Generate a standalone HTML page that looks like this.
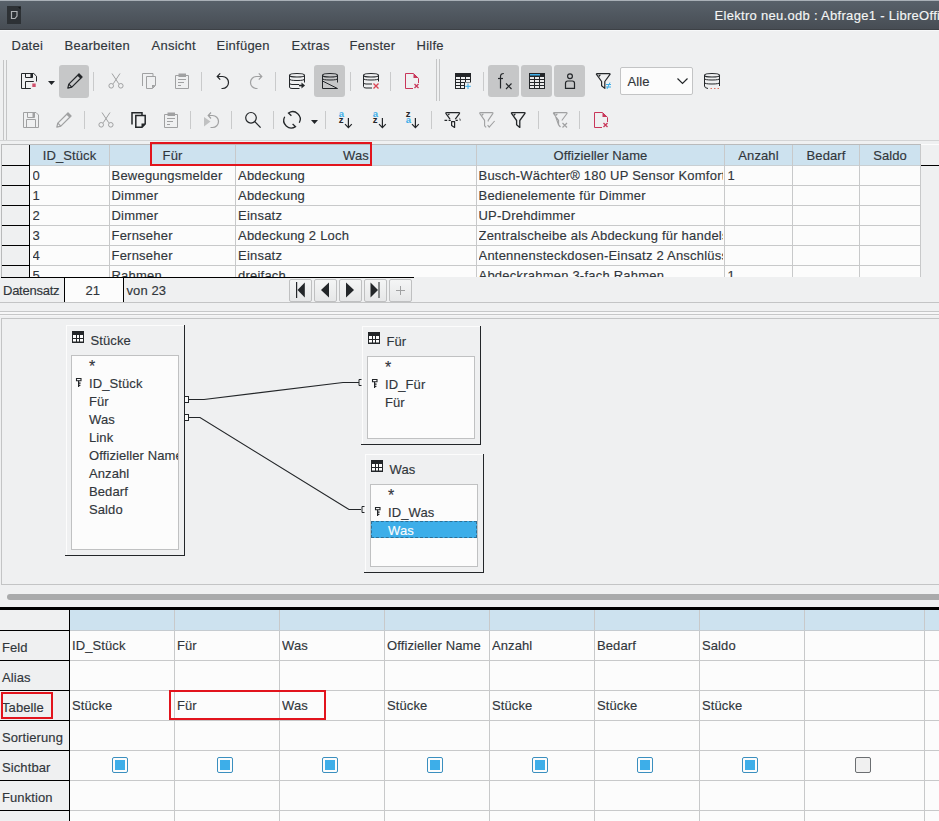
<!DOCTYPE html>
<html><head><meta charset="utf-8">
<style>
*{margin:0;padding:0;box-sizing:border-box}
html,body{width:939px;height:821px;overflow:hidden;background:#eff0f1;font-family:"Liberation Sans",sans-serif;color:#31363b;font-size:13px;position:relative}
.a{position:absolute}
.t{position:absolute;white-space:nowrap;line-height:1.5;letter-spacing:0.1px;-webkit-text-stroke:0.15px currentColor}
svg{position:absolute;overflow:visible}
</style></head><body>

<div class="a" style="left:0px;top:0px;width:939px;height:1px;background:#a9b0b7;"></div>
<div class="a" style="left:0px;top:1px;width:939px;height:28px;background:linear-gradient(#58616a,#474d54);"></div>
<div class="a" style="left:0px;top:29px;width:939px;height:1px;background:#3d4146;"></div>
<div class="a" style="left:0px;top:30px;width:939px;height:1px;background:#f7f8f9;"></div>
<div class="a" style="left:7px;top:6px;width:14px;height:18px;background:#2d3135;"></div>
<svg style="left:7px;top:6px" width="14" height="18" viewBox="0 0 14 18"><path d="M4.5 5.5h5.5v4.5l-2 2.5h-3.5z" fill="none" stroke="#aeb1b4" stroke-width="1.2"/><path d="M11 1h2.5v2.5z" fill="#15181a"/></svg>
<div class="t" style="left:714.5px;top:5.70px;font-size:13px;color:#f4f5f5;letter-spacing:0.3px">Elektro neu.odb : Abfrage1 - LibreOffice Base: Abfrageentwurf</div>
<div class="t" style="left:11.5px;top:35.70px;font-size:13px;letter-spacing:0.25px">Datei</div>
<div class="t" style="left:64.5px;top:35.70px;font-size:13px;letter-spacing:0.25px">Bearbeiten</div>
<div class="t" style="left:151.5px;top:35.70px;font-size:13px;letter-spacing:0.25px">Ansicht</div>
<div class="t" style="left:216.5px;top:35.70px;font-size:13px;letter-spacing:0.25px">Einfügen</div>
<div class="t" style="left:291.5px;top:35.70px;font-size:13px;letter-spacing:0.25px">Extras</div>
<div class="t" style="left:349.5px;top:35.70px;font-size:13px;letter-spacing:0.25px">Fenster</div>
<div class="t" style="left:416.5px;top:35.70px;font-size:13px;letter-spacing:0.25px">Hilfe</div>
<div class="a" style="left:3px;top:60px;width:1px;height:80px;background:#c4c5c6;"></div>
<div class="a" style="left:6px;top:60px;width:1px;height:80px;background:#c4c5c6;"></div>
<div class="a" style="left:436px;top:59px;width:1px;height:42px;background:#c4c5c6;"></div>
<div class="a" style="left:439px;top:59px;width:1px;height:42px;background:#c4c5c6;"></div>
<div class="a" style="left:0px;top:140px;width:939px;height:1px;background:#d3d4d5;"></div>
<div class="a" style="left:59px;top:65px;width:30px;height:33px;background:#c6c7c8;border-radius:3px"></div>
<div class="a" style="left:314px;top:65px;width:31px;height:32px;background:#c6c7c8;border-radius:3px"></div>
<div class="a" style="left:488px;top:65px;width:31px;height:32px;background:#c6c7c8;border-radius:3px"></div>
<div class="a" style="left:521px;top:65px;width:31px;height:32px;background:#c6c7c8;border-radius:3px"></div>
<div class="a" style="left:554px;top:65px;width:31px;height:32px;background:#c6c7c8;border-radius:3px"></div>
<div class="a" style="left:93px;top:72px;width:1px;height:19px;background:#c9cacb;"></div>
<div class="a" style="left:201px;top:72px;width:1px;height:19px;background:#c9cacb;"></div>
<div class="a" style="left:275px;top:72px;width:1px;height:19px;background:#c9cacb;"></div>
<div class="a" style="left:350px;top:72px;width:1px;height:19px;background:#c9cacb;"></div>
<div class="a" style="left:390px;top:72px;width:1px;height:19px;background:#c9cacb;"></div>
<div class="a" style="left:483px;top:72px;width:1px;height:19px;background:#c9cacb;"></div>
<div class="a" style="left:84px;top:111px;width:1px;height:18px;background:#c9cacb;"></div>
<div class="a" style="left:190px;top:111px;width:1px;height:18px;background:#c9cacb;"></div>
<div class="a" style="left:231px;top:111px;width:1px;height:18px;background:#c9cacb;"></div>
<div class="a" style="left:273px;top:111px;width:1px;height:18px;background:#c9cacb;"></div>
<div class="a" style="left:325px;top:111px;width:1px;height:18px;background:#c9cacb;"></div>
<div class="a" style="left:431px;top:111px;width:1px;height:18px;background:#c9cacb;"></div>
<div class="a" style="left:538px;top:111px;width:1px;height:18px;background:#c9cacb;"></div>
<div class="a" style="left:579px;top:111px;width:1px;height:18px;background:#c9cacb;"></div>
<svg style="left:21px;top:73px" width="16" height="16" viewBox="0 0 16 16"><path d="M15.5 8.5V3.2L12.8 0.5H0.5V15.5H9.8" fill="none" stroke="#232629" stroke-width="1" /><path d="M4.5 0.5V4.5H11.5V0.5" fill="none" stroke="#232629" stroke-width="1" /><path d="M9.4 1h2.3v3.5H9.4z" fill="#232629"/><path d="M4.5 15.5V8.5H12.8" fill="none" stroke="#232629" stroke-width="1" /><path d="M11.3 10.5h3.4v3.6h-3.4z" fill="#d0506c"/></svg>
<svg style="left:48px;top:81px" width="7" height="4" viewBox="0 0 7 4"><path d="M0 0h7l-3.5 4z" fill="#232629"/></svg>
<svg style="left:67px;top:73px" width="16" height="16" viewBox="0 0 16 16"><path d="M0.8 15.2L1.8 11.2L12 1L15 4L4.8 14.2Z" fill="none" stroke="#232629" stroke-width="1.2" stroke-linejoin="round"/><path d="M12 0.6L15.4 4L13.6 5.8L10.2 2.4Z" fill="#232629"/><path d="M1.8 11.2L4.8 14.2" fill="none" stroke="#232629" stroke-width="1.2" /></svg>
<svg style="left:108px;top:73px" width="16" height="16" viewBox="0 0 16 16"><path d="M4 0.5L10.8 10.8M12 0.5L5.2 10.8" fill="none" stroke="#a0a1a2" stroke-width="1" /><circle cx="3.2" cy="12.8" r="2.3" fill="none" stroke="#a0a1a2"/><circle cx="12.8" cy="12.8" r="2.3" fill="none" stroke="#a0a1a2"/></svg>
<svg style="left:141px;top:73px" width="16" height="16" viewBox="0 0 16 16"><path d="M1.5 13V0.5H12V3" fill="none" stroke="#a0a1a2" stroke-width="1" /><path d="M5.5 3.5H14.5V12.5L11.5 15.5H5.5Z" fill="none" stroke="#a0a1a2" stroke-width="1" /><path d="M11 15.5V12H14.5Z" fill="#a0a1a2"/></svg>
<svg style="left:174px;top:73px" width="16" height="16" viewBox="0 0 16 16"><path d="M1.5 2.5H14.5V15.5H1.5Z" fill="none" stroke="#a0a1a2" stroke-width="1" /><path d="M4.5 0.5H12V4H4.5z" fill="#a0a1a2"/><path d="M4 6.5H12M4 9.5H10M4 12.5H7" fill="none" stroke="#a0a1a2" stroke-width="1" /></svg>
<svg style="left:215px;top:73px" width="16" height="16" viewBox="0 0 16 16"><path d="M2.5 3.5H7.5A6 6 0 0 1 7.5 15.5H6.5" fill="none" stroke="#232629" stroke-width="1.2" /><path d="M5.2 0.3L2.2 3.5L5.2 6.7" fill="none" stroke="#232629" stroke-width="1.2" /></svg>
<svg style="left:248px;top:73px" width="16" height="16" viewBox="0 0 16 16"><path d="M13.5 3.5H8.5A6 6 0 0 0 8.5 15.5H9.5" fill="none" stroke="#a0a1a2" stroke-width="1.2" /><path d="M10.8 0.3L13.8 3.5L10.8 6.7" fill="none" stroke="#a0a1a2" stroke-width="1.2" /></svg>
<svg style="left:289px;top:73px" width="16" height="16" viewBox="0 0 16 16"><path d="M0.5 2.5Q0.5 0.5 8 0.5Q15.5 0.5 15.5 2.5Q15.5 4 8 4Q0.5 4 0.5 2.5Z" fill="none" stroke="#232629" stroke-width="1.2" /><path d="M0.5 2.5V14Q0.5 15.5 3 15.5H10.5M15.5 2.5V9.5" fill="none" stroke="#232629" stroke-width="1" /><path d="M0.5 6.0Q0.5 7.5 8 7.5Q15.5 7.5 15.5 6.0" fill="none" stroke="#232629" stroke-width="1" /><path d="M0.5 10Q0.5 11.5 3 11.5H10" fill="none" stroke="#232629" stroke-width="1" /><path d="M10 12.5H13" fill="none" stroke="#232629" stroke-width="1.6" /><path d="M12.5 9.5L16 12.5L12.5 15.5Z" fill="#232629"/></svg>
<svg style="left:322px;top:73px" width="16" height="16" viewBox="0 0 16 16"><path d="M0.5 2.5Q0.5 0.5 8 0.5Q15.5 0.5 15.5 2.5Q15.5 4 8 4Q0.5 4 0.5 2.5Z" fill="none" stroke="#232629" stroke-width="1.2" /><path d="M0.5 2.5V15.5H15.5L0.5 8M15.5 2.5V9.5" fill="none" stroke="#232629" stroke-width="1" /><path d="M0.5 5.5Q0.5 7 8 7Q15.5 7 15.5 5.5" fill="none" stroke="#232629" stroke-width="1" /></svg>
<svg style="left:363px;top:73px" width="16" height="16" viewBox="0 0 16 16"><path d="M0.5 2.5Q0.5 0.5 8 0.5Q15.5 0.5 15.5 2.5Q15.5 4 8 4Q0.5 4 0.5 2.5Z" fill="none" stroke="#232629" stroke-width="1.2" /><path d="M0.5 2.5V13.5Q0.5 15 3 15H9M15.5 2.5V8.5" fill="none" stroke="#232629" stroke-width="1" /><path d="M0.5 5.5Q0.5 7 8 7Q15.5 7 15.5 5.5" fill="none" stroke="#232629" stroke-width="1" /><path d="M0.5 9.5Q0.5 11 3 11H9" fill="none" stroke="#232629" stroke-width="1" /><path d="M10.5 10.5L15.5 15.5M15.5 10.5L10.5 15.5" fill="none" stroke="#da4453" stroke-width="1.3" /></svg>
<svg style="left:405px;top:73px" width="16" height="16" viewBox="0 0 16 16"><path d="M8.5 0.5H0.5V15.5H8" fill="none" stroke="#c8375a" stroke-width="1" /><path d="M8.5 0.5L13.5 5.5V10" fill="none" stroke="#c8375a" stroke-width="1" /><path d="M8.5 0.5V5H13.5Z" fill="#c8375a"/><path d="M9.5 11L13.5 15M13.5 11L9.5 15" fill="none" stroke="#c8375a" stroke-width="1.3" /></svg>
<svg style="left:455px;top:73px" width="16" height="16" viewBox="0 0 16 16"><path d="M0 0H16V9.5H10V16H0Z" fill="#232629"/><path d="M1 4h4v2h-4z" fill="#eff0f1"/><path d="M6 4h4v2h-4z" fill="#eff0f1"/><path d="M11 4h4v2h-4z" fill="#eff0f1"/><path d="M1 7h4v2h-4z" fill="#eff0f1"/><path d="M6 7h4v2h-4z" fill="#eff0f1"/><path d="M11 7h4v2h-4z" fill="#eff0f1"/><path d="M1 10h4v2h-4z" fill="#eff0f1"/><path d="M6 10h4v2h-4z" fill="#eff0f1"/><path d="M1 13h4v2h-4z" fill="#eff0f1"/><path d="M6 13h4v2h-4z" fill="#eff0f1"/><path d="M9 10h1v6h-1z" fill="#232629"/><path d="M13 10.5V16M10.3 13.3H15.8" fill="none" stroke="#3daee9" stroke-width="1" /></svg>
<svg style="left:496px;top:73px" width="16" height="16" viewBox="0 0 16 16"><path d="M4.5 15.5V3.5Q4.5 0.5 7.8 0.5" fill="none" stroke="#232629" stroke-width="1.2" /><path d="M2 5.5H7" fill="none" stroke="#232629" stroke-width="1.2" /><path d="M10 10.5L15.5 16M15.5 10.5L10 16" fill="none" stroke="#232629" stroke-width="1.2" /></svg>
<svg style="left:529px;top:73px" width="16" height="16" viewBox="0 0 16 16"><path d="M0 0H16V16H0Z" fill="#232629"/><path d="M1 4h4v2h-4z" fill="#e8e8e8"/><path d="M6 4h4v2h-4z" fill="#e8e8e8"/><path d="M11 4h4v2h-4z" fill="#e8e8e8"/><path d="M1 7h4v2h-4z" fill="#e8e8e8"/><path d="M6 7h4v2h-4z" fill="#e8e8e8"/><path d="M11 7h4v2h-4z" fill="#e8e8e8"/><path d="M1 10h4v2h-4z" fill="#e8e8e8"/><path d="M6 10h4v2h-4z" fill="#e8e8e8"/><path d="M11 10h4v2h-4z" fill="#e8e8e8"/><path d="M1 13h4v2h-4z" fill="#e8e8e8"/><path d="M6 13h4v2h-4z" fill="#e8e8e8"/><path d="M11 13h4v2h-4z" fill="#e8e8e8"/><path d="M1 1h10v1.5H1z" fill="#3daee9"/></svg>
<svg style="left:562px;top:73px" width="16" height="16" viewBox="0 0 16 16"><circle cx="8" cy="3.2" r="2.4" fill="none" stroke="#232629" stroke-width="1.2"/><path d="M3.5 15.4V10.2Q3.5 8 5.7 8H10.3Q12.5 8 12.5 10.2V15.4Z" fill="none" stroke="#232629" stroke-width="1.2" /></svg>
<svg style="left:596px;top:73px" width="16" height="16" viewBox="0 0 16 16"><path d="M1.2 0.6H13.3Q14.6 0.6 13.8 1.7L8.8 8.5V15.4L5.6 12.8V8.5L0.7 1.7Q-0.1 0.6 1.2 0.6Z" fill="none" stroke="#232629" stroke-width="1.2" stroke-linejoin="round"/><path d="M2.3 1.8H5L3.3 3.9Z" fill="#232629"/><path d="M10 11.5H15M10 14H15M14 9.5L11 16" fill="none" stroke="#3daee9" stroke-width="1" /></svg>
<div class="a" style="left:620px;top:67px;width:73px;height:28px;background:#fcfcfc;border:1px solid #c3c4c5;border-radius:2px"></div>
<div class="t" style="left:627.5px;top:71.70px;font-size:13px;">Alle</div>
<svg style="left:677px;top:78px" width="11" height="6" viewBox="0 0 11 6"><path d="M0.5 0.5l5 5 5-5" fill="none" stroke="#232629" stroke-width="1.2"/></svg>
<svg style="left:704px;top:73px" width="16" height="16" viewBox="0 0 16 16"><path d="M0.5 2.5Q0.5 0.5 8 0.5Q15.5 0.5 15.5 2.5Q15.5 4 8 4Q0.5 4 0.5 2.5Z" fill="none" stroke="#232629" stroke-width="1.2" /><path d="M0.5 2.5V13Q0.5 15 4 15.5M15.5 2.5V13" fill="none" stroke="#232629" stroke-width="1" /><path d="M0.5 5.5Q0.5 7 8 7Q15.5 7 15.5 5.5" fill="none" stroke="#232629" stroke-width="1" /><path d="M0.5 9.5Q0.5 11 8 11Q15.5 11 15.5 9.5" fill="none" stroke="#232629" stroke-width="1" /><path d="M6.5 15.5H8M10 15.5H11.5M13.5 15.5H15" fill="none" stroke="#e07060" stroke-width="1.2" /></svg>
<svg style="left:23px;top:112px" width="16" height="16" viewBox="0 0 16 16"><path d="M0.5 0.5H13L15.5 3V15.5H0.5Z" fill="none" stroke="#a0a1a2" stroke-width="1" /><path d="M4.5 0.5V5.5H11.5V0.5" fill="none" stroke="#a0a1a2" stroke-width="1" /><path d="M9.5 1h2v4h-2z" fill="#a0a1a2"/><path d="M3.5 15.5V7.5H12.5V15.5" fill="none" stroke="#a0a1a2" stroke-width="1" /></svg>
<svg style="left:56px;top:112px" width="16" height="16" viewBox="0 0 16 16"><path d="M0.8 15.2L1.8 11.2L12 1L15 4L4.8 14.2Z" fill="none" stroke="#a0a1a2" stroke-width="1.2" stroke-linejoin="round"/><path d="M12 0.6L15.4 4L13.6 5.8L10.2 2.4Z" fill="#a0a1a2"/><path d="M1.8 11.2L4.8 14.2" fill="none" stroke="#a0a1a2" stroke-width="1.2" /></svg>
<svg style="left:98px;top:112px" width="16" height="16" viewBox="0 0 16 16"><path d="M4 0.5L10.8 10.8M12 0.5L5.2 10.8" fill="none" stroke="#a0a1a2" stroke-width="1" /><circle cx="3.2" cy="12.8" r="2.3" fill="none" stroke="#a0a1a2"/><circle cx="12.8" cy="12.8" r="2.3" fill="none" stroke="#a0a1a2"/></svg>
<svg style="left:131px;top:112px" width="16" height="16" viewBox="0 0 16 16"><path d="M1 12.5V0.8H11V3" fill="none" stroke="#232629" stroke-width="1.5" /><path d="M4.8 3.5H14.2V12L11 15.2H4.8Z" fill="none" stroke="#232629" stroke-width="1.5" /><path d="M10.5 15.5V11.5H14.5Z" fill="#232629"/></svg>
<svg style="left:163px;top:112px" width="16" height="16" viewBox="0 0 16 16"><path d="M1.5 2.5H14.5V15.5H1.5Z" fill="none" stroke="#a0a1a2" stroke-width="1" /><path d="M4.5 0.5H12V4H4.5z" fill="#a0a1a2"/><path d="M4 6.5H12M4 9.5H10M4 12.5H7" fill="none" stroke="#a0a1a2" stroke-width="1" /></svg>
<svg style="left:204px;top:112px" width="16" height="16" viewBox="0 0 16 16"><path d="M0 5L6.5 9.5L0 14.5Z" fill="#c0c1c2"/><path d="M4.5 3.5H8.5A6 6 0 0 1 8.5 15.5H6.5" fill="none" stroke="#a0a1a2" stroke-width="1.2" /><path d="M7 0.5L4.2 3.5L7 6.5" fill="none" stroke="#a0a1a2" stroke-width="1.2" /></svg>
<svg style="left:245px;top:112px" width="16" height="16" viewBox="0 0 16 16"><circle cx="6" cy="5.8" r="5.3" fill="none" stroke="#232629" stroke-width="1.2"/><path d="M9.8 9.6L15.6 15.6" fill="none" stroke="#232629" stroke-width="1.3" /></svg>
<svg style="left:284px;top:112px" width="16" height="16" viewBox="0 0 16 16"><path d="M0.7 4.8A7.5 7.5 0 0 0 11.5 14.6L8.6 11.9" fill="none" stroke="#232629" stroke-width="1.3" /><path d="M15.3 10.8A7.5 7.5 0 0 0 4.5 1L7.4 3.8" fill="none" stroke="#232629" stroke-width="1.3" /></svg>
<svg style="left:311px;top:120px" width="7" height="4" viewBox="0 0 7 4"><path d="M0 0h7l-3.5 4z" fill="#232629"/></svg>
<svg style="left:338px;top:112px" width="16" height="16" viewBox="0 0 16 16"><text x="0.8" y="4.8" font-family="Liberation Sans" font-weight="bold" font-size="9.5" fill="#3daee9">a</text><text x="0.8" y="10.9" font-family="Liberation Sans" font-weight="bold" font-size="9.5" fill="#232629">z</text><path d="M10.4 6V15.5M7 12.2L10.4 15.6L13.8 12.2" fill="none" stroke="#232629" stroke-width="1.2" /></svg>
<svg style="left:372px;top:112px" width="16" height="16" viewBox="0 0 16 16"><text x="0.8" y="4.8" font-family="Liberation Sans" font-weight="bold" font-size="9.5" fill="#3daee9">a</text><text x="0.8" y="10.9" font-family="Liberation Sans" font-weight="bold" font-size="9.5" fill="#232629">z</text><path d="M10.4 6V15.5M7 12.2L10.4 15.6L13.8 12.2" fill="none" stroke="#232629" stroke-width="1.2" /></svg>
<svg style="left:405px;top:112px" width="16" height="16" viewBox="0 0 16 16"><text x="0.8" y="4.8" font-family="Liberation Sans" font-weight="bold" font-size="9.5" fill="#232629">z</text><text x="0.8" y="10.9" font-family="Liberation Sans" font-weight="bold" font-size="9.5" fill="#3daee9">a</text><path d="M10.4 6V15.5M7 12.2L10.4 15.6L13.8 12.2" fill="none" stroke="#232629" stroke-width="1.2" /></svg>
<svg style="left:445px;top:112px" width="16" height="16" viewBox="0 0 16 16"><path d="M5 7.2L1 1.6Q0.4 0.6 1.6 0.6H13.8Q15 0.6 14.4 1.6L10.3 7.2" fill="none" stroke="#232629" stroke-width="1.2" stroke-linejoin="round"/><path d="M2.6 1.8H5.2L3.6 3.6Z" fill="#232629"/><path d="M-0.5 8.4H2.2M3.6 8.4H5.8M10.6 8.4H12.8" fill="none" stroke="#232629" stroke-width="1.1" /><path d="M6.6 9.6V13.4L9.6 15.4V9.6Z" fill="none" stroke="#232629" stroke-width="1.2" stroke-linejoin="round"/><path d="M14.6 5.6L15.9 8.4H14.6Z" fill="#232629"/></svg>
<svg style="left:479px;top:112px" width="16" height="16" viewBox="0 0 16 16"><path d="M5.6 14V8.4L0.9 1.6Q0.3 0.6 1.5 0.6H13.2Q14.4 0.6 13.8 1.6L9.2 8.4V9.5" fill="none" stroke="#a0a1a2" stroke-width="1.1" stroke-linejoin="round"/><path d="M5.6 14L7.2 15.4" fill="none" stroke="#a0a1a2" stroke-width="1.1" /><path d="M8.6 13.2L10.2 15.2L15.6 9" fill="none" stroke="#a0a1a2" stroke-width="1.1" /><path d="M2.3 1.8H5L3.3 3.9Z" fill="#a0a1a2"/></svg>
<svg style="left:511px;top:112px" width="16" height="16" viewBox="0 0 16 16"><path d="M1.2 0.6H13.3Q14.6 0.6 13.8 1.7L8.8 8.5V15.4L5.6 12.8V8.5L0.7 1.7Q-0.1 0.6 1.2 0.6Z" fill="none" stroke="#232629" stroke-width="1.3" stroke-linejoin="round"/><path d="M2.3 1.8H5L3.3 3.9Z" fill="#232629"/></svg>
<svg style="left:553px;top:112px" width="16" height="16" viewBox="0 0 16 16"><path d="M1.2 0.6H13.3Q14.6 0.6 13.8 1.7L8.8 8.5M5.6 13V8.5L0.7 1.7Q-0.1 0.6 1.2 0.6Z" fill="none" stroke="#a0a1a2" stroke-width="1.1" /><path d="M5.6 13L7.5 15" fill="none" stroke="#a0a1a2" stroke-width="1.1" /><path d="M9.5 11L14 15.5M14 11L9.5 15.5" fill="none" stroke="#a0a1a2" stroke-width="1.2" /><path d="M2.3 1.8H5L3.3 3.9Z" fill="#a0a1a2"/></svg>
<svg style="left:594px;top:112px" width="16" height="16" viewBox="0 0 16 16"><path d="M8.5 0.5H0.5V15.5H8" fill="none" stroke="#c8375a" stroke-width="1" /><path d="M8.5 0.5L13.5 5.5V10" fill="none" stroke="#c8375a" stroke-width="1" /><path d="M8.5 0.5V5H13.5Z" fill="#c8375a"/><path d="M9.5 11L13.5 15M13.5 11L9.5 15" fill="none" stroke="#c8375a" stroke-width="1.3" /></svg>
<div class="a" style="left:1px;top:144px;width:938px;height:133px;background:#fcfcfc;"></div>
<div class="a" style="left:1px;top:144px;width:920px;height:1px;background:#b9babb;"></div>
<div class="a" style="left:1px;top:144px;width:1px;height:158px;background:#b9babb;"></div>
<div class="a" style="left:2px;top:145px;width:27px;height:132px;background:#eff0f1;"></div>
<div class="a" style="left:29px;top:145px;width:1px;height:132px;background:#000;"></div>
<div class="a" style="left:30px;top:145px;width:891px;height:20px;background:#cde2ef;"></div>
<div class="a" style="left:921px;top:145px;width:18px;height:132px;background:#eff0f1;"></div>
<div class="a" style="left:921px;top:165px;width:18px;height:1px;background:#000;"></div>
<div class="a" style="left:30px;top:165px;width:891px;height:1px;background:#c9cfd3;"></div>
<div class="a" style="left:109px;top:145px;width:1px;height:132px;background:#c8c9ca;"></div>
<div class="a" style="left:235px;top:145px;width:1px;height:132px;background:#c8c9ca;"></div>
<div class="a" style="left:476px;top:145px;width:1px;height:132px;background:#c8c9ca;"></div>
<div class="a" style="left:724px;top:145px;width:1px;height:132px;background:#c8c9ca;"></div>
<div class="a" style="left:792px;top:145px;width:1px;height:132px;background:#c8c9ca;"></div>
<div class="a" style="left:859px;top:145px;width:1px;height:132px;background:#c8c9ca;"></div>
<div class="a" style="left:920px;top:145px;width:1px;height:132px;background:#c8c9ca;"></div>
<div class="a" style="left:30px;top:185px;width:891px;height:1px;background:#c8c9ca;"></div>
<div class="a" style="left:30px;top:205px;width:891px;height:1px;background:#c8c9ca;"></div>
<div class="a" style="left:30px;top:225px;width:891px;height:1px;background:#c8c9ca;"></div>
<div class="a" style="left:30px;top:245px;width:891px;height:1px;background:#c8c9ca;"></div>
<div class="a" style="left:30px;top:265px;width:891px;height:1px;background:#c8c9ca;"></div>
<div class="a" style="left:2px;top:165px;width:27px;height:1px;background:#000;"></div>
<div class="a" style="left:2px;top:185px;width:27px;height:1px;background:#000;"></div>
<div class="a" style="left:2px;top:205px;width:27px;height:1px;background:#000;"></div>
<div class="a" style="left:2px;top:225px;width:27px;height:1px;background:#000;"></div>
<div class="a" style="left:2px;top:245px;width:27px;height:1px;background:#000;"></div>
<div class="a" style="left:2px;top:265px;width:27px;height:1px;background:#000;"></div>
<div class="t" style="left:30px;width:79px;text-align:center;top:145.70px;font-size:13px">ID_Stück</div>
<div class="t" style="left:110px;width:125px;text-align:center;top:145.70px;font-size:13px">Für</div>
<div class="t" style="left:236px;width:240px;text-align:center;top:145.70px;font-size:13px">Was</div>
<div class="t" style="left:477px;width:247px;text-align:center;top:145.70px;font-size:13px">Offizieller Name</div>
<div class="t" style="left:725px;width:67px;text-align:center;top:145.70px;font-size:13px">Anzahl</div>
<div class="t" style="left:793px;width:66px;text-align:center;top:145.70px;font-size:13px">Bedarf</div>
<div class="t" style="left:860px;width:60px;text-align:center;top:145.70px;font-size:13px">Saldo</div>
<div class="a" style="left:30px;top:165px;width:891px;height:112px;overflow:hidden">
<div class="t" style="left:2.5px;width:76px;overflow:hidden;top:0.70px;font-size:13px;letter-spacing:0.22px">0</div>
<div class="t" style="left:81.5px;width:122px;overflow:hidden;top:0.70px;font-size:13px;letter-spacing:0.22px">Bewegungsmelder</div>
<div class="t" style="left:208px;width:237px;overflow:hidden;top:0.70px;font-size:13px;letter-spacing:0.22px">Abdeckung</div>
<div class="t" style="left:448.5px;width:244px;overflow:hidden;top:0.70px;font-size:13px;letter-spacing:0.22px">Busch-Wächter® 180 UP Sensor Komfort</div>
<div class="t" style="left:697.5px;width:64px;overflow:hidden;top:0.70px;font-size:13px;letter-spacing:0.22px">1</div>
<div class="t" style="left:2.5px;width:76px;overflow:hidden;top:20.70px;font-size:13px;letter-spacing:0.22px">1</div>
<div class="t" style="left:81.5px;width:122px;overflow:hidden;top:20.70px;font-size:13px;letter-spacing:0.22px">Dimmer</div>
<div class="t" style="left:208px;width:237px;overflow:hidden;top:20.70px;font-size:13px;letter-spacing:0.22px">Abdeckung</div>
<div class="t" style="left:448.5px;width:244px;overflow:hidden;top:20.70px;font-size:13px;letter-spacing:0.22px">Bedienelemente für Dimmer</div>
<div class="t" style="left:2.5px;width:76px;overflow:hidden;top:40.70px;font-size:13px;letter-spacing:0.22px">2</div>
<div class="t" style="left:81.5px;width:122px;overflow:hidden;top:40.70px;font-size:13px;letter-spacing:0.22px">Dimmer</div>
<div class="t" style="left:208px;width:237px;overflow:hidden;top:40.70px;font-size:13px;letter-spacing:0.22px">Einsatz</div>
<div class="t" style="left:448.5px;width:244px;overflow:hidden;top:40.70px;font-size:13px;letter-spacing:0.22px">UP-Drehdimmer</div>
<div class="t" style="left:2.5px;width:76px;overflow:hidden;top:60.70px;font-size:13px;letter-spacing:0.22px">3</div>
<div class="t" style="left:81.5px;width:122px;overflow:hidden;top:60.70px;font-size:13px;letter-spacing:0.22px">Fernseher</div>
<div class="t" style="left:208px;width:237px;overflow:hidden;top:60.70px;font-size:13px;letter-spacing:0.22px">Abdeckung 2 Loch</div>
<div class="t" style="left:448.5px;width:244px;overflow:hidden;top:60.70px;font-size:13px;letter-spacing:0.22px">Zentralscheibe als Abdeckung für handelsübliche</div>
<div class="t" style="left:2.5px;width:76px;overflow:hidden;top:80.70px;font-size:13px;letter-spacing:0.22px">4</div>
<div class="t" style="left:81.5px;width:122px;overflow:hidden;top:80.70px;font-size:13px;letter-spacing:0.22px">Fernseher</div>
<div class="t" style="left:208px;width:237px;overflow:hidden;top:80.70px;font-size:13px;letter-spacing:0.22px">Einsatz</div>
<div class="t" style="left:448.5px;width:244px;overflow:hidden;top:80.70px;font-size:13px;letter-spacing:0.22px">Antennensteckdosen-Einsatz 2 Anschlüsse</div>
<div class="t" style="left:2.5px;width:76px;overflow:hidden;top:100.70px;font-size:13px;letter-spacing:0.22px">5</div>
<div class="t" style="left:81.5px;width:122px;overflow:hidden;top:100.70px;font-size:13px;letter-spacing:0.22px">Rahmen</div>
<div class="t" style="left:208px;width:237px;overflow:hidden;top:100.70px;font-size:13px;letter-spacing:0.22px">dreifach</div>
<div class="t" style="left:448.5px;width:244px;overflow:hidden;top:100.70px;font-size:13px;letter-spacing:0.22px">Abdeckrahmen 3-fach Rahmen</div>
<div class="t" style="left:697.5px;width:64px;overflow:hidden;top:100.70px;font-size:13px;letter-spacing:0.22px">1</div>
</div>
<div class="a" style="left:150px;top:142px;width:222px;height:24px;background:transparent;border:2px solid #e2141d"></div>
<div class="a" style="left:1px;top:277px;width:413px;height:1px;background:#000;"></div>
<div class="a" style="left:1px;top:278px;width:63px;height:24px;background:#eff0f1;"></div>
<div class="a" style="left:64px;top:278px;width:1px;height:24px;background:#000;"></div>
<div class="a" style="left:65px;top:278px;width:58px;height:24px;background:#fcfcfc;"></div>
<div class="a" style="left:123px;top:278px;width:1px;height:24px;background:#000;"></div>
<div class="a" style="left:0px;top:302px;width:939px;height:1px;background:#c3c4c5;"></div>
<div class="t" style="left:3px;top:280.70px;font-size:13px;letter-spacing:-0.25px">Datensatz</div>
<div class="t" style="left:85.5px;top:280.70px;font-size:13px;">21</div>
<div class="t" style="left:126.5px;top:280.70px;font-size:13px;">von 23</div>
<div class="a" style="left:289px;top:279px;width:23px;height:23px;background:linear-gradient(#f4f5f5,#e6e7e8);border:1px solid #bfc0c1;border-radius:2px"></div>
<div class="a" style="left:314px;top:279px;width:23px;height:23px;background:linear-gradient(#f4f5f5,#e6e7e8);border:1px solid #bfc0c1;border-radius:2px"></div>
<div class="a" style="left:339px;top:279px;width:23px;height:23px;background:linear-gradient(#f4f5f5,#e6e7e8);border:1px solid #bfc0c1;border-radius:2px"></div>
<div class="a" style="left:364px;top:279px;width:23px;height:23px;background:linear-gradient(#f4f5f5,#e6e7e8);border:1px solid #bfc0c1;border-radius:2px"></div>
<div class="a" style="left:389px;top:279px;width:23px;height:23px;background:linear-gradient(#f4f5f5,#e6e7e8);border:1px solid #bfc0c1;border-radius:2px"></div>
<svg style="left:289px;top:279px" width="23" height="23" viewBox="0 0 23 23"><path d="M7 3h1.2v16H7z" fill="#232629"/><path d="M8.5 11L15.8 3.5V18.5Z" fill="#232629"/></svg>
<svg style="left:314px;top:279px" width="23" height="23" viewBox="0 0 23 23"><path d="M7 11L15 3.5V18.5Z" fill="#232629"/></svg>
<svg style="left:339px;top:279px" width="23" height="23" viewBox="0 0 23 23"><path d="M7 3.5V18.5L15 11Z" fill="#232629"/></svg>
<svg style="left:364px;top:279px" width="23" height="23" viewBox="0 0 23 23"><path d="M14.5 3h1v16h-1z" fill="#232629"/><path d="M6.5 3.5V18.5L14 11Z" fill="#232629"/></svg>
<svg style="left:389px;top:279px" width="23" height="23" viewBox="0 0 23 23"><path d="M11.5 7v9M7 11.5h9" stroke="#a0a1a2" stroke-width="1"/></svg>
<div class="a" style="left:0px;top:311px;width:939px;height:1px;background:#c6c7c8;"></div>
<div class="a" style="left:0px;top:312px;width:939px;height:2px;background:#f7f7f8;"></div>
<div class="a" style="left:0px;top:314px;width:939px;height:1px;background:#c6c7c8;"></div>
<div class="a" style="left:0px;top:315px;width:939px;height:1px;background:#f5f5f6;"></div>
<div class="a" style="left:1px;top:318px;width:938px;height:267px;background:#eff0f1;border:1px solid #c3c4c5;border-right:none"></div>
<div class="a" style="left:66px;top:325px;width:118px;height:230px;background:#eff0f1;border-left:1px solid #fcfcfc;border-top:1px solid #fcfcfc"></div>
<div class="a" style="left:184px;top:325px;width:1px;height:231px;background:#232629;"></div>
<div class="a" style="left:65px;top:555px;width:120px;height:1px;background:#232629;"></div>
<svg style="left:72px;top:331px" width="12" height="12" viewBox="0 0 12 12"><rect x="0" y="0" width="12" height="12" fill="#232629"/><rect x="1" y="4" width="3" height="3" fill="#fcfcfc"/><rect x="1" y="8" width="3" height="2.5" fill="#fcfcfc"/><rect x="5" y="4" width="2" height="3" fill="#fcfcfc"/><rect x="5" y="8" width="2" height="2.5" fill="#fcfcfc"/><rect x="8" y="4" width="3" height="3" fill="#fcfcfc"/><rect x="8" y="8" width="3" height="2.5" fill="#fcfcfc"/></svg>
<div class="t" style="left:90.5px;top:331.20px;font-size:13px;">Stücke</div>
<div class="a" style="left:71px;top:355px;width:108px;height:195px;background:#fcfcfc;border:1px solid #c0c1c2"></div>
<div class="a" style="left:72px;top:356px;width:106px;height:193px;overflow:hidden">
<div class="t" style="left:17px;top:-1.10px;font-size:16px;color:#31363b">*</div>
<div class="t" style="left:17px;top:18.30px;font-size:13px;color:#31363b">ID_Stück</div>
<svg style="left:4px;top:22px" width="6" height="9" viewBox="0 0 6 9"><path d="M0.5 0.5h4.5v2.2h-4.5z" fill="none" stroke="#232629" stroke-width="1.1"/><path d="M2.6 2.7v6.2M2.6 5.2h2M2.6 7.3h1.8" fill="none" stroke="#232629" stroke-width="1.2"/></svg>
<div class="t" style="left:17px;top:36.30px;font-size:13px;color:#31363b">Für</div>
<div class="t" style="left:17px;top:54.30px;font-size:13px;color:#31363b">Was</div>
<div class="t" style="left:17px;top:72.30px;font-size:13px;color:#31363b">Link</div>
<div class="t" style="left:17px;top:90.30px;font-size:13px;color:#31363b">Offizieller Name</div>
<div class="t" style="left:17px;top:108.30px;font-size:13px;color:#31363b">Anzahl</div>
<div class="t" style="left:17px;top:126.30px;font-size:13px;color:#31363b">Bedarf</div>
<div class="t" style="left:17px;top:144.30px;font-size:13px;color:#31363b">Saldo</div>
</div>
<div class="a" style="left:362px;top:326px;width:118px;height:118px;background:#eff0f1;border-left:1px solid #fcfcfc;border-top:1px solid #fcfcfc"></div>
<div class="a" style="left:480px;top:326px;width:1px;height:119px;background:#232629;"></div>
<div class="a" style="left:361px;top:444px;width:120px;height:1px;background:#232629;"></div>
<svg style="left:368px;top:332px" width="12" height="12" viewBox="0 0 12 12"><rect x="0" y="0" width="12" height="12" fill="#232629"/><rect x="1" y="4" width="3" height="3" fill="#fcfcfc"/><rect x="1" y="8" width="3" height="2.5" fill="#fcfcfc"/><rect x="5" y="4" width="2" height="3" fill="#fcfcfc"/><rect x="5" y="8" width="2" height="2.5" fill="#fcfcfc"/><rect x="8" y="4" width="3" height="3" fill="#fcfcfc"/><rect x="8" y="8" width="3" height="2.5" fill="#fcfcfc"/></svg>
<div class="t" style="left:386.5px;top:332.20px;font-size:13px;">Für</div>
<div class="a" style="left:367px;top:356px;width:108px;height:83px;background:#fcfcfc;border:1px solid #c0c1c2"></div>
<div class="a" style="left:368px;top:357px;width:106px;height:81px;overflow:hidden">
<div class="t" style="left:17px;top:-1.10px;font-size:16px;color:#31363b">*</div>
<div class="t" style="left:17px;top:18.30px;font-size:13px;color:#31363b">ID_Für</div>
<svg style="left:4px;top:22px" width="6" height="9" viewBox="0 0 6 9"><path d="M0.5 0.5h4.5v2.2h-4.5z" fill="none" stroke="#232629" stroke-width="1.1"/><path d="M2.6 2.7v6.2M2.6 5.2h2M2.6 7.3h1.8" fill="none" stroke="#232629" stroke-width="1.2"/></svg>
<div class="t" style="left:17px;top:36.30px;font-size:13px;color:#31363b">Für</div>
</div>
<div class="a" style="left:365px;top:454px;width:118px;height:118px;background:#eff0f1;border-left:1px solid #fcfcfc;border-top:1px solid #fcfcfc"></div>
<div class="a" style="left:483px;top:454px;width:1px;height:119px;background:#232629;"></div>
<div class="a" style="left:364px;top:572px;width:120px;height:1px;background:#232629;"></div>
<svg style="left:371px;top:460px" width="12" height="12" viewBox="0 0 12 12"><rect x="0" y="0" width="12" height="12" fill="#232629"/><rect x="1" y="4" width="3" height="3" fill="#fcfcfc"/><rect x="1" y="8" width="3" height="2.5" fill="#fcfcfc"/><rect x="5" y="4" width="2" height="3" fill="#fcfcfc"/><rect x="5" y="8" width="2" height="2.5" fill="#fcfcfc"/><rect x="8" y="4" width="3" height="3" fill="#fcfcfc"/><rect x="8" y="8" width="3" height="2.5" fill="#fcfcfc"/></svg>
<div class="t" style="left:389.5px;top:460.20px;font-size:13px;">Was</div>
<div class="a" style="left:370px;top:484px;width:108px;height:83px;background:#fcfcfc;border:1px solid #c0c1c2"></div>
<div class="a" style="left:371px;top:485px;width:106px;height:81px;overflow:hidden">
<div class="t" style="left:17px;top:-1.10px;font-size:16px;color:#31363b">*</div>
<div class="t" style="left:17px;top:18.30px;font-size:13px;color:#31363b">ID_Was</div>
<svg style="left:4px;top:22px" width="6" height="9" viewBox="0 0 6 9"><path d="M0.5 0.5h4.5v2.2h-4.5z" fill="none" stroke="#232629" stroke-width="1.1"/><path d="M2.6 2.7v6.2M2.6 5.2h2M2.6 7.3h1.8" fill="none" stroke="#232629" stroke-width="1.2"/></svg>
<div class="a" style="left:0;top:36px;width:106px;height:17px;background:#3daee9;border:1px dashed #2d6f96"></div>
<div class="t" style="left:17px;top:36.30px;font-size:13px;color:#fcfcfc">Was</div>
</div>
<svg style="left:0px;top:0px" width="939" height="821" viewBox="0 0 939 821"><path d="M188.5 399.5H204L343 382.5H359" fill="none" stroke="#232629" stroke-width="1.1"/><path d="M188.5 417.5H200L349 509.5H361" fill="none" stroke="#232629" stroke-width="1.1"/><rect x="184.5" y="396.5" width="4" height="6" fill="#fcfcfc" stroke="#232629"/><rect x="184.5" y="414.5" width="4" height="6" fill="#fcfcfc" stroke="#232629"/><path d="M361.5 379.5h-2.5v6h2.5" fill="none" stroke="#232629"/><path d="M364.5 506.5h-2.5v6h2.5" fill="none" stroke="#232629"/></svg>
<div class="a" style="left:7px;top:594px;width:940px;height:6px;background:#a9aaab;border-radius:3px"></div>
<div class="a" style="left:0px;top:607px;width:939px;height:3px;background:#000;"></div>
<div class="a" style="left:0px;top:610px;width:939px;height:211px;background:#fcfcfc;"></div>
<div class="a" style="left:0px;top:610px;width:69px;height:211px;background:#eff0f1;"></div>
<div class="a" style="left:69px;top:610px;width:1px;height:211px;background:#000;"></div>
<div class="a" style="left:70px;top:610px;width:869px;height:20px;background:#cde2ef;"></div>
<div class="a" style="left:174px;top:610px;width:1px;height:211px;background:#c8c9ca;"></div>
<div class="a" style="left:279px;top:610px;width:1px;height:211px;background:#c8c9ca;"></div>
<div class="a" style="left:384px;top:610px;width:1px;height:211px;background:#c8c9ca;"></div>
<div class="a" style="left:489px;top:610px;width:1px;height:211px;background:#c8c9ca;"></div>
<div class="a" style="left:594px;top:610px;width:1px;height:211px;background:#c8c9ca;"></div>
<div class="a" style="left:699px;top:610px;width:1px;height:211px;background:#c8c9ca;"></div>
<div class="a" style="left:804px;top:610px;width:1px;height:211px;background:#c8c9ca;"></div>
<div class="a" style="left:924px;top:610px;width:1px;height:211px;background:#c8c9ca;"></div>
<div class="a" style="left:70px;top:660px;width:869px;height:1px;background:#c8c9ca;"></div>
<div class="a" style="left:70px;top:690px;width:869px;height:1px;background:#c8c9ca;"></div>
<div class="a" style="left:70px;top:720px;width:869px;height:1px;background:#c8c9ca;"></div>
<div class="a" style="left:70px;top:750px;width:869px;height:1px;background:#c8c9ca;"></div>
<div class="a" style="left:70px;top:780px;width:869px;height:1px;background:#c8c9ca;"></div>
<div class="a" style="left:70px;top:810px;width:869px;height:1px;background:#c8c9ca;"></div>
<div class="a" style="left:70px;top:630px;width:869px;height:1px;background:#c5cbd0;"></div>
<div class="a" style="left:0px;top:630px;width:69px;height:1px;background:#000;"></div>
<div class="a" style="left:0px;top:660px;width:69px;height:1px;background:#000;"></div>
<div class="a" style="left:0px;top:690px;width:69px;height:1px;background:#000;"></div>
<div class="a" style="left:0px;top:720px;width:69px;height:1px;background:#000;"></div>
<div class="a" style="left:0px;top:750px;width:69px;height:1px;background:#000;"></div>
<div class="a" style="left:0px;top:780px;width:69px;height:1px;background:#000;"></div>
<div class="a" style="left:0px;top:810px;width:69px;height:1px;background:#000;"></div>
<div class="t" style="left:2px;top:637.70px;font-size:13px;">Feld</div>
<div class="t" style="left:2px;top:667.70px;font-size:13px;">Alias</div>
<div class="t" style="left:2px;top:697.70px;font-size:13px;">Tabelle</div>
<div class="t" style="left:2px;top:727.70px;font-size:13px;">Sortierung</div>
<div class="t" style="left:2px;top:757.70px;font-size:13px;">Sichtbar</div>
<div class="t" style="left:2px;top:787.70px;font-size:13px;">Funktion</div>
<div class="a" style="left:70px;top:610px;width:869px;height:211px;overflow:hidden">
<div class="t" style="left:2px;width:102px;overflow:hidden;top:25.70px;font-size:13px">ID_Stück</div>
<div class="t" style="left:2px;width:102px;overflow:hidden;top:85.70px;font-size:13px">Stücke</div>
<div class="t" style="left:107px;width:102px;overflow:hidden;top:25.70px;font-size:13px">Für</div>
<div class="t" style="left:107px;width:102px;overflow:hidden;top:85.70px;font-size:13px">Für</div>
<div class="t" style="left:212px;width:102px;overflow:hidden;top:25.70px;font-size:13px">Was</div>
<div class="t" style="left:212px;width:102px;overflow:hidden;top:85.70px;font-size:13px">Was</div>
<div class="t" style="left:317px;width:102px;overflow:hidden;top:25.70px;font-size:13px">Offizieller Name</div>
<div class="t" style="left:317px;width:102px;overflow:hidden;top:85.70px;font-size:13px">Stücke</div>
<div class="t" style="left:422px;width:102px;overflow:hidden;top:25.70px;font-size:13px">Anzahl</div>
<div class="t" style="left:422px;width:102px;overflow:hidden;top:85.70px;font-size:13px">Stücke</div>
<div class="t" style="left:527px;width:102px;overflow:hidden;top:25.70px;font-size:13px">Bedarf</div>
<div class="t" style="left:527px;width:102px;overflow:hidden;top:85.70px;font-size:13px">Stücke</div>
<div class="t" style="left:632px;width:102px;overflow:hidden;top:25.70px;font-size:13px">Saldo</div>
<div class="t" style="left:632px;width:102px;overflow:hidden;top:85.70px;font-size:13px">Stücke</div>
</div>
<div class="a" style="left:112px;top:757px;width:16px;height:16px;background:#fcfcfc;border:1px solid #3a8fbf;border-radius:2px"></div>
<div class="a" style="left:115px;top:760px;width:10px;height:10px;background:#3daee9;"></div>
<div class="a" style="left:217px;top:757px;width:16px;height:16px;background:#fcfcfc;border:1px solid #3a8fbf;border-radius:2px"></div>
<div class="a" style="left:220px;top:760px;width:10px;height:10px;background:#3daee9;"></div>
<div class="a" style="left:322px;top:757px;width:16px;height:16px;background:#fcfcfc;border:1px solid #3a8fbf;border-radius:2px"></div>
<div class="a" style="left:325px;top:760px;width:10px;height:10px;background:#3daee9;"></div>
<div class="a" style="left:427px;top:757px;width:16px;height:16px;background:#fcfcfc;border:1px solid #3a8fbf;border-radius:2px"></div>
<div class="a" style="left:430px;top:760px;width:10px;height:10px;background:#3daee9;"></div>
<div class="a" style="left:532px;top:757px;width:16px;height:16px;background:#fcfcfc;border:1px solid #3a8fbf;border-radius:2px"></div>
<div class="a" style="left:535px;top:760px;width:10px;height:10px;background:#3daee9;"></div>
<div class="a" style="left:637px;top:757px;width:16px;height:16px;background:#fcfcfc;border:1px solid #3a8fbf;border-radius:2px"></div>
<div class="a" style="left:640px;top:760px;width:10px;height:10px;background:#3daee9;"></div>
<div class="a" style="left:742px;top:757px;width:16px;height:16px;background:#fcfcfc;border:1px solid #3a8fbf;border-radius:2px"></div>
<div class="a" style="left:745px;top:760px;width:10px;height:10px;background:#3daee9;"></div>
<div class="a" style="left:855px;top:757px;width:16px;height:16px;background:#f0f0f0;border:1px solid #6b6e71;border-radius:2px"></div>
<div class="a" style="left:1px;top:692px;width:52px;height:27px;background:transparent;border:2px solid #e2141d"></div>
<div class="a" style="left:169px;top:690px;width:157px;height:30px;background:transparent;border:2px solid #e2141d"></div>
</body></html>
